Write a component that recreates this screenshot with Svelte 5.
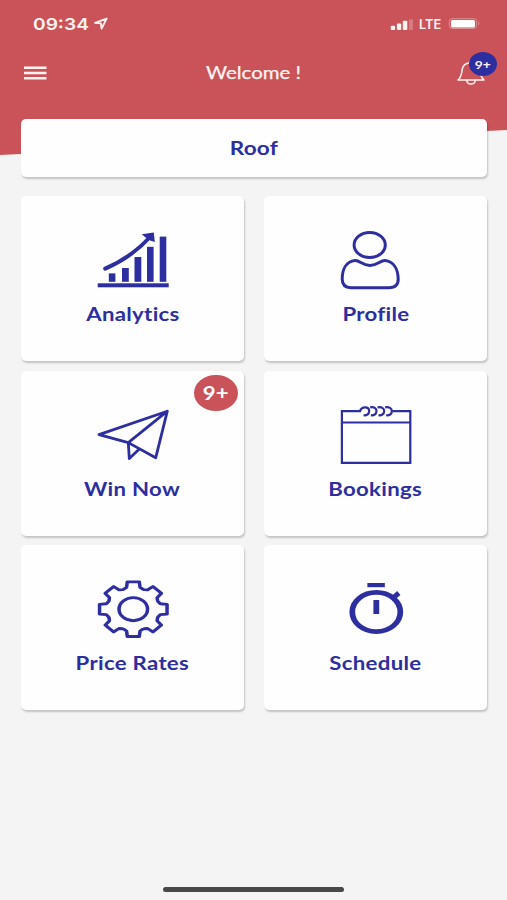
<script>
    const title = "Welcome !";
    const category = "Roof";

    const tiles = [
        { icon: "analytics", label: "Analytics" },
        { icon: "profile", label: "Profile" },
        { icon: "plane", label: "Win Now", badge: "9+" },
        { icon: "calendar", label: "Bookings" },
        { icon: "gear", label: "Price Rates" },
        { icon: "timer", label: "Schedule" },
    ];

    const tooth = [[-7.6, -19.8], [-5.4, -21.6], [-4.8, -27], [4.8, -27], [5.4, -21.6], [7.6, -19.8]];

    // eight teeth, each turned 45 degrees further round the hub
    function gearPoints() {
        const points = [];
        for (let i = 0; i < 8; i++) {
            const a = (i * Math.PI) / 4;
            for (const [x, y] of tooth) {
                const px = x * Math.cos(a) - y * Math.sin(a);
                const py = x * Math.sin(a) + y * Math.cos(a);
                points.push(`${px.toFixed(2)},${py.toFixed(2)}`);
            }
        }
        return points.join(" ");
    }
</script>

<div class="screen">
    <header>
        <div class="status">
            <span class="time">09:34</span>
            <svg class="location" width="16" height="14" viewBox="0 0 16 14">
                <path d="M2 5.9 L13.6 1.6 L8.6 11.6 L7.9 6.4 Z" />
            </svg>
            <svg class="signal" width="23" height="13" viewBox="0 0 23 13">
                <rect x="0.7" y="7.7" width="4.4" height="4.3" rx="1" />
                <rect x="6.9" y="5.5" width="4.3" height="6.5" rx="1" />
                <rect x="12.8" y="2.7" width="4.5" height="9.3" rx="1" />
                <rect class="off" x="19" y="1.2" width="4" height="10.8" rx="1" />
            </svg>
            <span class="network">LTE</span>
            <svg class="battery" width="34" height="13" viewBox="0 0 34 13">
                <rect class="case" x="1.3" y="1.7" width="27.4" height="9.8" rx="3" />
                <rect x="3" y="3" width="24" height="7.6" rx="1.5" />
                <path class="off" d="M30.2 4.3 q2.6 2.2 0 4.4 Z" />
            </svg>
        </div>

        <div class="nav">
            <button class="menu" aria-label="Menu">
                <svg width="23" height="14" viewBox="0 0 23 14">
                    <path d="M0 1.7 H22.5 M0 7 H22.5 M0 12.3 H22.5" />
                </svg>
            </button>
            <h1>{title}</h1>
            <div class="bell">
                <svg width="30" height="26" viewBox="0 0 30 26">
                    <path d="M2 20 C6.5 16 5.3 12 6.6 8 C7.6 4.8 10.5 3.3 13 3 C13.2 0.8 16.8 0.8 17 3 C20 3.4 22.4 5.5 23.2 8 C24.3 12 23.6 16 28 20 Z" />
                    <path d="M10.7 20 C11 25.4 19 25.4 19.3 20" />
                </svg>
                <span class="count"><b>9+</b></span>
            </div>
        </div>
    </header>

    <main>
        <div class="card selector"><span>{category}</span></div>

        <div class="grid">
            {#each tiles as tile}
                <div class="card tile">
                    <svg width="83" height="64" viewBox="0 0 83 64">
                        {#if tile.icon === "analytics"}
                            <g class="solid">
                                <rect x="6.7" y="53.3" width="71" height="4" />
                                <rect x="17.8" y="43.4" width="6.6" height="8.4" />
                                <rect x="31" y="38" width="6.8" height="13.8" />
                                <rect x="43.5" y="27" width="6.8" height="24.8" />
                                <rect x="56" y="16.8" width="6.6" height="35" />
                                <rect x="68.7" y="6.6" width="6.6" height="45.2" />
                                <path d="M50.8 4.2 L62.8 2.6 L63.8 12 L59 10.4 L53.4 6.4 Z" />
                            </g>
                            <path class="trend" d="M14.2 38.7 Q41 27 59.5 6.5" />
                        {:else if tile.icon === "profile"}
                            <ellipse cx="35.7" cy="15" rx="15.6" ry="12.6" />
                            <path d="M21 30.6 C13 31.5 8.2 38 8.2 49 C8.2 54.5 11 57.7 17 57.7 H55 C61.4 57.7 64.4 54.5 64.2 49 C64 38 59 31.5 51 30.6 C46 30.4 44 35.4 36 35.4 C28 35.4 26 30.4 21 30.6 Z" />
                        {:else if tile.icon === "plane"}
                            <g class="medium">
                                <path d="M76.3 6.2 L8 29.6 L37.3 37.6 L64.7 52.8 Z L37.3 37.6 L38.3 53.6 L47.8 44.6" />
                            </g>
                        {:else if tile.icon === "calendar"}
                            <g class="thin">
                                <path d="M27 6.2 H7.9 V57.8 H76.3 V6.2 H58.5 M8 17.5 H76.3" />
                                <path d="M26 6.2 C27.5 1 35.2 1.3 35.2 6 C35.2 9.3 32.5 10.6 29.6 10.2" />
                                <path d="M36.2 2.4 C40 1.4 42.5 3.4 42.5 6 C42.5 9.3 39.8 10.6 36.9 10.2" />
                                <path d="M43.6 2.4 C47.4 1.4 50.2 3.4 50.2 6 C50.2 9.3 47.4 10.6 44.5 10.2" />
                                <path d="M51.2 2.4 C55 1.4 57.9 3.4 57.9 6 C57.9 9.3 55.1 10.6 52.2 10.2" />
                            </g>
                        {:else if tile.icon === "gear"}
                            <g transform="translate(42.3 30.2) scale(1.25 1.01)">
                                <polygon class="cog" points={gearPoints()} />
                                <circle class="cog" r="11.4" />
                            </g>
                        {:else}
                            <g transform="translate(42.3 33) scale(1.22 1)">
                                <circle class="dial" r="19.7" />
                            </g>
                            <path class="knob" d="M57.5 20.3 L64.8 14" />
                            <g class="solid">
                                <rect x="33.4" y="4" width="17.4" height="4.2" />
                                <rect x="39.4" y="21" width="5.8" height="14" />
                            </g>
                        {/if}
                    </svg>
                    <span class="label">{tile.label}</span>
                    {#if tile.badge}
                        <span class="badge"><b>{tile.badge}</b></span>
                    {/if}
                </div>
            {/each}
        </div>
    </main>

    <div class="home-bar"></div>
</div>

<style>
    :global(body) {
        background: #f4f4f4;
    }

    .screen {
        display: flex;
        flex-direction: column;
        height: 900px;
        overflow: hidden;
        background: #f4f4f4;
        font-family: Lato, "Open Sans", sans-serif;
        color: #2d2e9f;
    }

    header {
        height: 155px;
        flex: none;
        background: #ca5359;
        color: #fff3f1;
        clip-path: polygon(0 0, 100% 0, 100% 130px, 0 155px);
    }

    .status {
        display: flex;
        align-items: center;
        height: 47px;
        box-sizing: border-box;
        padding-left: 33px;
        font-family: Inter, "Liberation Sans", sans-serif;
    }

    .time {
        width: 60px;
        font-size: 16.5px;
        font-weight: 600;
        transform: scaleX(1.16);
        transform-origin: left;
    }

    .location path {
        fill: none;
        stroke: #fff3f1;
        stroke-width: 1.9;
        stroke-linejoin: round;
    }

    .signal {
        margin-left: 281px;
        margin-top: 2px;
        fill: #fff3f1;
    }

    .off {
        opacity: 0.25;
    }

    .network {
        width: 25px;
        margin: 1px 0 0 6px;
        font-size: 12.5px;
        font-weight: 600;
        transform: scaleX(1.02);
        transform-origin: left;
    }

    .battery {
        margin-left: 4px;
        fill: #fff;
    }

    .battery .case {
        fill: none;
        stroke: #fff;
        stroke-opacity: 0.35;
        stroke-width: 1;
    }

    .nav {
        display: grid;
        grid-template-columns: 60px 1fr 60px;
        align-items: center;
        height: 52px;
    }

    .menu {
        width: 23px;
        margin: 0 0 0 24px;
        padding: 0;
        border: none;
        background: none;
    }

    .menu svg {
        display: block;
        stroke: #fff3f1;
        stroke-width: 2.5;
    }

    h1 {
        margin: 0;
        font-size: 17px;
        font-weight: 400;
        line-height: 24px;
        text-align: center;
        -webkit-text-stroke: 0.25px #fff3f1;
        transform: scaleX(1.2);
    }

    .bell {
        position: relative;
        width: 30px;
        height: 26px;
        margin-left: 9px;
    }

    .bell svg {
        display: block;
        fill: none;
        stroke: #fff3f1;
        stroke-width: 1.5;
        stroke-linejoin: round;
    }

    .count {
        position: absolute;
        left: 13px;
        top: -8px;
        width: 28px;
        height: 24px;
        border-radius: 50%;
        background: #2d2e9f;
        font-size: 11.5px;
        line-height: 25px;
        text-align: center;
    }

    .count b,
    .badge b {
        display: inline-block;
        transform: scaleX(1.2);
    }

    main {
        position: relative;
        margin-top: -36px;
        padding: 0 20px 0 21px;
    }

    .card {
        background: #fefefe;
        border-radius: 5px;
        box-shadow: 1px 2px 2px rgba(0, 0, 0, 0.2);
    }

    .selector {
        display: flex;
        align-items: center;
        justify-content: center;
        height: 58px;
        font-size: 18.5px;
        font-weight: 700;
    }

    .selector span {
        letter-spacing: 0.2px;
        transform: scaleX(1.22);
    }

    .grid {
        display: grid;
        grid-template-columns: 223px 223px;
        grid-auto-rows: 165px;
        gap: 9.6px 20px;
        margin-top: 19px;
    }

    .tile {
        position: relative;
        display: flex;
        flex-direction: column;
        align-items: center;
        box-sizing: border-box;
        padding-top: 34px;
    }

    .tile svg {
        fill: none;
        stroke: #2d2e9f;
        stroke-width: 3;
        stroke-linejoin: round;
    }

    .solid {
        fill: #2d2e9f;
        stroke: none;
    }

    .trend {
        stroke-width: 4;
        stroke-linecap: round;
    }

    .medium {
        stroke-width: 2.8;
        stroke-linecap: round;
    }

    .thin {
        stroke-width: 2.2;
        stroke-linejoin: miter;
    }

    .cog {
        stroke-width: 2.8;
    }

    .dial {
        stroke-width: 4.7;
    }

    .knob {
        stroke-width: 5;
    }

    .label {
        margin-top: 8px;
        font-size: 18.5px;
        font-weight: 700;
        line-height: 24px;
        letter-spacing: 0.25px;
        white-space: nowrap;
        transform: scaleX(1.2);
    }

    .badge {
        position: absolute;
        right: 6px;
        top: 4px;
        width: 44px;
        height: 36px;
        border-radius: 50%;
        background: #ca5359;
        color: #fff;
        font-size: 18.5px;
        line-height: 36px;
        text-align: center;
    }

    .home-bar {
        width: 181px;
        height: 5px;
        margin: auto auto 8px;
        border-radius: 3px;
        background: #484848;
    }
</style>
